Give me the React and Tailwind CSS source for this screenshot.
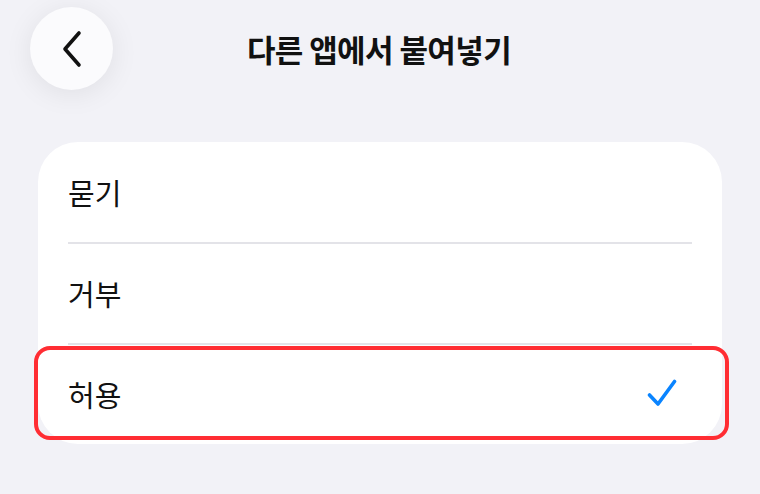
import React from "react";

function Chevron() {
  return (
    <svg width="24" height="38" viewBox="0 0 24 38" fill="none">
      <path d="M19 3 L5 19 L19 35" stroke="#111" strokeWidth="3.6" strokeLinecap="round" strokeLinejoin="round" />
    </svg>
  );
}

function Check() {
  return (
    <svg width="30" height="28" viewBox="0 0 30 28" fill="none">
      <path d="M2.5 16 L11 25 L27.5 2.5" stroke="#0a84ff" strokeWidth="3.6" strokeLinecap="round" strokeLinejoin="round" />
    </svg>
  );
}

export default function App() {
  const font = { fontFamily: '"Noto Sans CJK KR", "Noto Sans", sans-serif' };
  return (
    <div className="w-[760px] h-[494px] bg-[#f2f2f7] overflow-hidden text-[#111]" style={font}>
      <div className="relative h-[98px] flex items-center justify-center">
        <div className="absolute left-[30px] top-[7px] w-[83px] h-[83px] rounded-full bg-[#fbfbfd] shadow-[0_4px_28px_rgba(0,0,0,0.08)] flex items-center justify-center">
          <Chevron />
        </div>
        <div className="text-[31px] font-bold tracking-[-0.6px] leading-none mt-[-2px] ml-[-2px]">다른 앱에서 붙여넣기</div>
      </div>
      <div className="mx-[38px] mt-[44px] bg-white rounded-[40px] relative">
        <div className="h-[100px] px-[30px] flex items-center">
          <span className="text-[29px] leading-none">묻기</span>
        </div>
        <div className="mx-[30px] h-[2px] bg-[#e3e3e8]" />
        <div className="h-[99px] px-[30px] flex items-center">
          <span className="text-[29px] leading-none">거부</span>
        </div>
        <div className="mx-[30px] h-[2px] bg-[#e3e3e8]" />
        <div className="h-[99px] px-[30px] flex items-center justify-between">
          <span className="text-[29px] leading-none">허용</span>
          <span className="mr-[15px] mt-[-4px]"><Check /></span>
        </div>
        <div className="absolute left-[-4px] right-[-7px] top-[204px] h-[94px] border-[4px] border-[#ff2d33] rounded-[16px]" />
      </div>
    </div>
  );
}
